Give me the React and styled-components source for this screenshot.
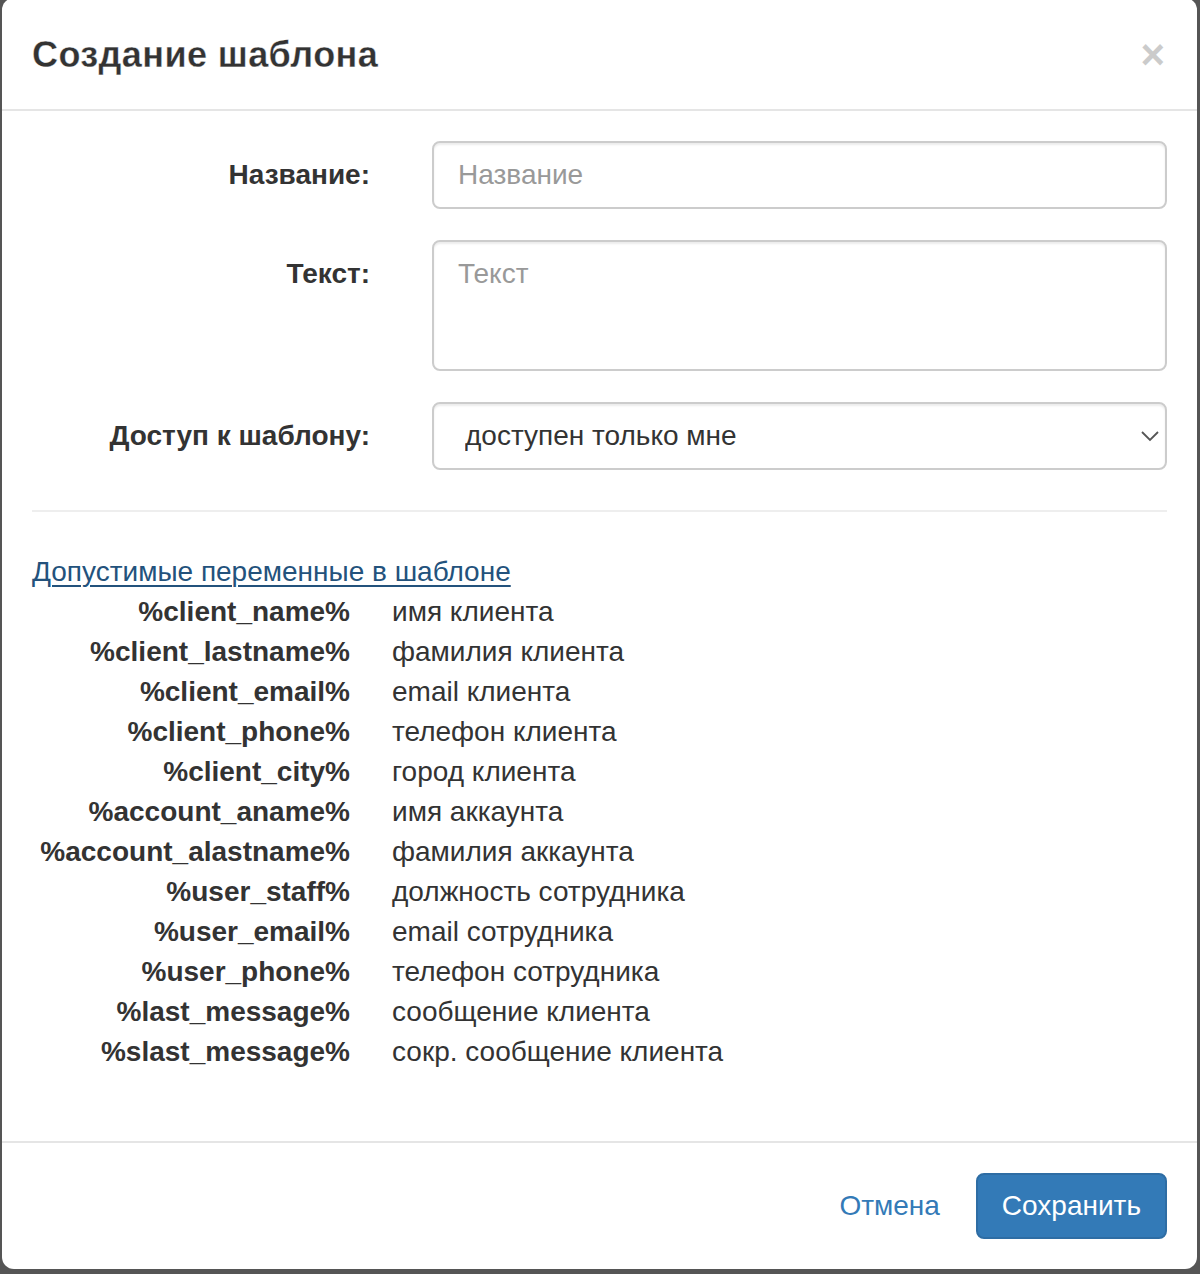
import styled, { createGlobalStyle } from 'styled-components';

const variables = [
  ['%client_name%', 'имя клиента'],
  ['%client_lastname%', 'фамилия клиента'],
  ['%client_email%', 'email клиента'],
  ['%client_phone%', 'телефон клиента'],
  ['%client_city%', 'город клиента'],
  ['%account_aname%', 'имя аккаунта'],
  ['%account_alastname%', 'фамилия аккаунта'],
  ['%user_staff%', 'должность сотрудника'],
  ['%user_email%', 'email сотрудника'],
  ['%user_phone%', 'телефон сотрудника'],
  ['%last_message%', 'сообщение клиента'],
  ['%slast_message%', 'сокр. сообщение клиента'],
];

export default function App() {
  return (
    <>
      <GlobalStyle />
      <Backdrop>
        <Modal>
          <Header>
            <Title>Создание шаблона</Title>
            <Close type="button" aria-label="Закрыть">×</Close>
          </Header>
          <Body>
            <Form>
              <FormGroup>
                <Label htmlFor="tpl-name">Название:</Label>
                <Field>
                  <Input id="tpl-name" type="text" placeholder="Название" />
                </Field>
              </FormGroup>
              <FormGroup>
                <Label htmlFor="tpl-text">Текст:</Label>
                <Field>
                  <Textarea id="tpl-text" placeholder="Текст" />
                </Field>
              </FormGroup>
              <FormGroup>
                <Label htmlFor="tpl-access">Доступ к шаблону:</Label>
                <Field>
                  <SelectWrap>
                    <Select id="tpl-access" defaultValue="me">
                      <option value="me">доступен только мне</option>
                      <option value="all">доступен всем</option>
                    </Select>
                    <Chevron width="18" height="12" viewBox="0 0 18 12">
                      <path d="M1 2 L9 10 L17 2" fill="none" stroke="#555" strokeWidth="1.8" />
                    </Chevron>
                  </SelectWrap>
                </Field>
              </FormGroup>
            </Form>
            <Divider />
            <VarsLink href="#vars">Допустимые переменные в шаблоне</VarsLink>
            <VarsList>
              {variables.map(([name, desc]) => (
                <VarRow key={name}>
                  <dt>{name}</dt>
                  <dd>{desc}</dd>
                </VarRow>
              ))}
            </VarsList>
          </Body>
          <Footer>
            <LinkButton type="button">Отмена</LinkButton>
            <PrimaryButton type="button">Сохранить</PrimaryButton>
          </Footer>
        </Modal>
      </Backdrop>
    </>
  );
}

const GlobalStyle = createGlobalStyle`
  * {
    box-sizing: border-box;
  }

  body {
    margin: 0;
    background: #555;
    font-family: "Liberation Sans", Arial, sans-serif;
    font-size: 28px;
    line-height: 40px;
    color: #333;
  }
`;

const Backdrop = styled.div`
  height: 1274px;
  padding: 0 3px 0 2px;
  overflow: hidden;
`;

const Modal = styled.div`
  margin-top: -2px;
  background: #fff;
  border-radius: 12px;
  overflow: hidden;
`;

const Header = styled.div`
  display: flex;
  align-items: center;
  justify-content: space-between;

  padding: 31px 30px 29px;

  border-bottom: 2px solid #e5e5e5;
`;

const Title = styled.h4`
  margin: 0;

  font-size: 36px;
  font-weight: bold;
  line-height: 51px;
  letter-spacing: 0.4px;
  color: #333;
  -webkit-text-stroke: 0.3px #fff;
`;

const Close = styled.button`
  padding: 0;
  margin-right: 2px;

  background: none;
  border: 0;

  font-family: inherit;
  font-size: 42px;
  font-weight: bold;
  line-height: 1;
  color: #000;
  opacity: 0.2;
`;

const Body = styled.div`
  padding: 30px 30px 30px;
`;

const Form = styled.form`
  margin: 0;
`;

const FormGroup = styled.div`
  display: grid;
  grid-template-columns: 338px 1fr;
  column-gap: 60px;

  & + & {
    margin-top: 31px;
  }
`;

const Label = styled.label`
  padding-top: 14px;

  text-align: right;
  font-weight: bold;
`;

const Field = styled.div`
  padding-left: 2px;
`;

const controlStyles = `
  display: block;
  width: 100%;

  padding: 12px 24px;

  background: #fff;
  border: 2px solid #ccc;
  border-radius: 8px;
  box-shadow: inset 0 2px 2px rgba(0, 0, 0, 0.075);

  font-family: inherit;
  font-size: 28px;
  line-height: 40px;
  color: #555;

  &::placeholder {
    color: #999;
  }
`;

const Input = styled.input`
  ${controlStyles}
  height: 68px;
`;

const Textarea = styled.textarea`
  ${controlStyles}
  height: 131px;
  resize: none;
`;

const SelectWrap = styled.div`
  position: relative;
`;

const Select = styled.select`
  ${controlStyles}
  height: 68px;
  padding-left: 31px;
  appearance: none;
  color: #333;
`;

const Chevron = styled.svg`
  position: absolute;
  top: 28px;
  right: 8px;
  pointer-events: none;
`;

const Divider = styled.hr`
  margin: 40px 0 40px;

  border: 0;
  border-top: 2px solid #eee;
`;

const VarsLink = styled.a`
  display: block;

  color: #23527c;
  text-decoration: underline;
  text-underline-offset: 4px;
  text-decoration-thickness: 2px;
`;

const VarsList = styled.dl`
  margin: 0 0 39px;
`;

const VarRow = styled.div`
  display: grid;
  grid-template-columns: 318px 1fr;
  column-gap: 42px;

  dt {
    text-align: right;
    font-weight: bold;
    white-space: nowrap;
  }

  dd {
    margin: 0;
  }
`;

const Footer = styled.div`
  display: flex;
  justify-content: flex-end;
  gap: 10px;

  padding: 30px;

  border-top: 2px solid #e5e5e5;
`;

const buttonStyles = `
  padding: 11px 24px;

  border: 2px solid transparent;
  border-radius: 8px;

  font-family: inherit;
  font-size: 28px;
  line-height: 40px;
  cursor: pointer;
`;

const LinkButton = styled.button`
  ${buttonStyles}
  background: transparent;
  color: #337ab7;
`;

const PrimaryButton = styled.button`
  ${buttonStyles}
  height: 66px;
  background: #337ab7;
  border-color: #2e6da4;
  color: #fff;
`;
